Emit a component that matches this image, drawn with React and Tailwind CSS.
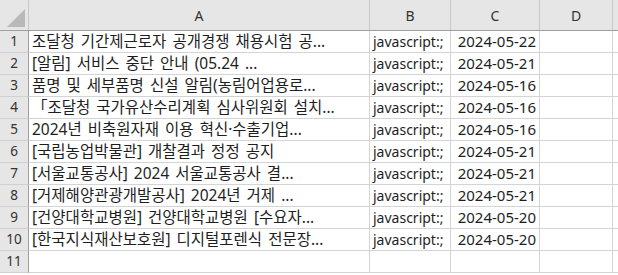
const COLS = [
  { id: "A", w: "w-[341px]" },
  { id: "B", w: "w-[81px]" },
  { id: "C", w: "w-[89px]" },
  { id: "D", w: "w-[73px]" },
];

const ROWS = [
  ["조달청 기간제근로자 공개경쟁 채용시험 공...", "2024-05-22"],
  ["[알림] 서비스 중단 안내 (05.24 ...", "2024-05-21"],
  ["품명 및 세부품명 신설 알림(농림어업용로...", "2024-05-16"],
  ["「조달청 국가유산수리계획 심사위원회 설치...", "2024-05-16"],
  ["2024년 비축원자재 이용 혁신·수출기업...", "2024-05-16"],
  ["[국립농업박물관] 개찰결과 정정 공지", "2024-05-21"],
  ["[서울교통공사] 2024 서울교통공사 결...", "2024-05-21"],
  ["[거제해양관광개발공사] 2024년 거제 ...", "2024-05-21"],
  ["[건양대학교병원] 건양대학교병원 [수요자...", "2024-05-20"],
  ["[한국지식재산보호원] 디지털포렌식 전문장...", "2024-05-20"],
  null,
];

const font = "font-['Noto_Sans','Noto_Sans_CJK_KR',sans-serif]";

function RowHead({ children }) {
  return (
    <div className="w-[29px] shrink-0 h-[22px] bg-[#e6e6e6] border-r border-r-[#9f9f9f] border-b border-b-[#d0d0d0] flex items-center justify-center text-[13.5px] text-[#333]">
      {children}
    </div>
  );
}

export default function App() {
  return (
    <div className={`w-[618px] h-[275px] bg-white overflow-hidden ${font} text-[#1e1e1e]`}>
      {/* column headers */}
      <div className="flex h-[31px] bg-[#e6e6e6] border-b border-[#9f9f9f]">
        <div className="w-[29px] shrink-0 border-r border-[#c8c8c8] flex items-end justify-end p-[3px]">
          <svg width="18" height="18" viewBox="0 0 18 18">
            <polygon points="18,0 18,18 0,18" fill="#b9b9b9" />
          </svg>
        </div>
        {COLS.map((c) => (
          <div
            key={c.id}
            className={`${c.w} shrink-0 border-r border-[#c8c8c8] flex items-center justify-center text-[14px] text-[#333]`}
          >
            {c.id}
          </div>
        ))}
        <div className="flex-1" />
      </div>

      {ROWS.map((r, i) => (
        <div key={i} className="flex h-[22px]">
          <RowHead>{i + 1}</RowHead>
          <div className="w-[341px] shrink-0 border-r border-b border-[#d4d4d4] pl-[3px] flex items-center text-[15.5px] [word-spacing:2px] whitespace-nowrap overflow-hidden">
            {r ? r[0] : ""}
          </div>
          <div className="w-[81px] shrink-0 border-r border-b border-[#d4d4d4] pl-[3px] flex items-center text-[14px] whitespace-nowrap overflow-hidden">
            {r ? "javascript:;" : ""}
          </div>
          <div className="w-[89px] shrink-0 border-r border-b border-[#d4d4d4] pr-[3px] flex items-center justify-end text-[15px] whitespace-nowrap">
            {r ? r[1] : ""}
          </div>
          <div className="w-[73px] shrink-0 border-r border-b border-[#d4d4d4]" />
          <div className="flex-1 border-b border-[#d4d4d4]" />
        </div>
      ))}
    </div>
  );
}
